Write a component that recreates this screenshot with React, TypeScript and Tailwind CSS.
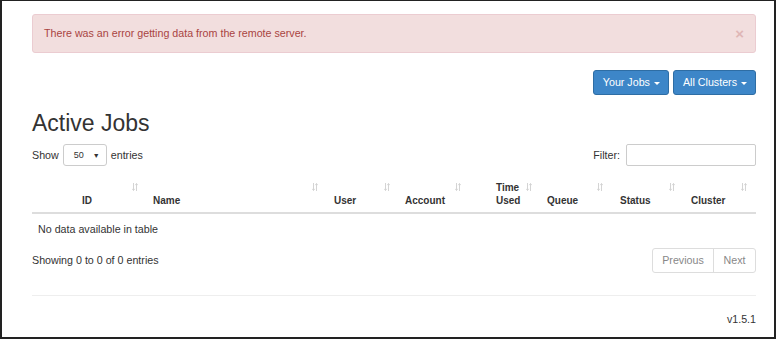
const columns = [
  { label: ["ID"], width: "w-[115px]", pad: "pl-[50px]" },
  { label: ["Name"], width: "w-[180px]", pad: "pl-[6px]" },
  { label: ["User"], width: "w-[72px]", pad: "pl-[7px]" },
  { label: ["Account"], width: "w-[71px]", pad: "pl-[6px]" },
  { label: ["Time", "Used"], width: "w-[71px]", pad: "pl-[26px]" },
  { label: ["Queue"], width: "w-[71px]", pad: "pl-[6px]" },
  { label: ["Status"], width: "w-[72px]", pad: "pl-[8px]" },
  { label: ["Cluster"], width: "w-[72px]", pad: "pl-[7px]" },
];

const SortIcon = () => (
  <svg width="6" height="8" viewBox="0 0 6 8" fill="none" stroke="#d4d4d4" strokeWidth="1">
    <line x1="1.5" y1="0" x2="1.5" y2="7.5" />
    <polyline points="0.3,5.8 1.5,7.5 2.7,5.8" />
    <line x1="4.5" y1="0.5" x2="4.5" y2="8" />
    <polyline points="3.3,2.2 4.5,0.5 5.7,2.2" />
  </svg>
);

const Caret = () => (
  <span className="inline-block ml-[4px] align-middle w-0 h-0 border-l-[3px] border-r-[3px] border-t-[3px] border-l-transparent border-r-transparent border-t-white" />
);

export default function App() {
  return (
    <div className="w-[776px] h-[339px] bg-white border-[#222] border-l-2 border-t border-r-2 border-b-2 pl-[30px] pr-[18px] pt-[13px] font-['Liberation_Sans',Arial,sans-serif] text-[10.7px] leading-[13px] text-[#333]">
      <div className="h-[39px] flex items-center justify-between pl-[11px] pr-[11px] bg-[#f2dede] border border-[#ebccd1] rounded-[3px] text-[#a94442]">
        <span>There was an error getting data from the remote server.</span>
        <span className="text-[15px] font-bold text-[#a94442] opacity-25 leading-none">×</span>
      </div>

      <div className="mt-[17px] flex justify-end gap-[4px]">
        <button className="h-[25px] pl-[9px] pr-[8px] rounded-[3px] bg-[#3d86c8] border border-[#2e6da4] text-white">
          Your Jobs<Caret />
        </button>
        <button className="h-[25px] pl-[9px] pr-[8px] rounded-[3px] bg-[#3d86c8] border border-[#2e6da4] text-white">
          All Clusters<Caret />
        </button>
      </div>

      <h1 className="mt-[15px] text-[23px] leading-[26px] text-[#333]">Active Jobs</h1>

      <div className="mt-[8px] h-[22px] flex items-center justify-between">
        <div className="flex items-center gap-[4px]">
          <span>Show</span>
          <div className="w-[44px] h-[22px] border border-[#ccc] rounded-[3px] flex items-center justify-between pl-[10px] pr-[6px] text-[9px]">
            <span>50</span>
            <span className="text-[7px]">▼</span>
          </div>
          <span>entries</span>
        </div>
        <div className="flex items-center gap-[6px]">
          <span>Filter:</span>
          <div className="w-[130px] h-[22px] border border-[#ccc] rounded-[2px]" />
        </div>
      </div>

      <div className="mt-[10px]">
        <div className="flex border-b-2 border-[#ddd] h-[38px] text-[10px]">
          {columns.map((c, i) => (
            <div key={i} className={`relative ${c.width} ${c.pad} flex flex-col justify-end pb-[5px] font-bold`}>
              {c.label.map((l) => (
                <span key={l}>{l}</span>
              ))}
              <span className="absolute top-[7px] right-[9px] flex">
                <SortIcon />
              </span>
            </div>
          ))}
        </div>
        <div className="h-[30px] flex items-center pl-[6px]">No data available in table</div>
      </div>

      <div className="mt-[4px] h-[25px] flex items-center justify-between">
        <span>Showing 0 to 0 of 0 entries</span>
        <div className="flex h-[25px] border border-[#ddd] rounded-[3px] text-[#888]">
          <span className="w-[61px] flex items-center justify-center border-r border-[#ddd]">Previous</span>
          <span className="w-[41px] flex items-center justify-center">Next</span>
        </div>
      </div>

      <div className="mt-[22px] border-t border-[#eee]" />

      <div className="mt-[17px] text-right">v1.5.1</div>
    </div>
  );
}
